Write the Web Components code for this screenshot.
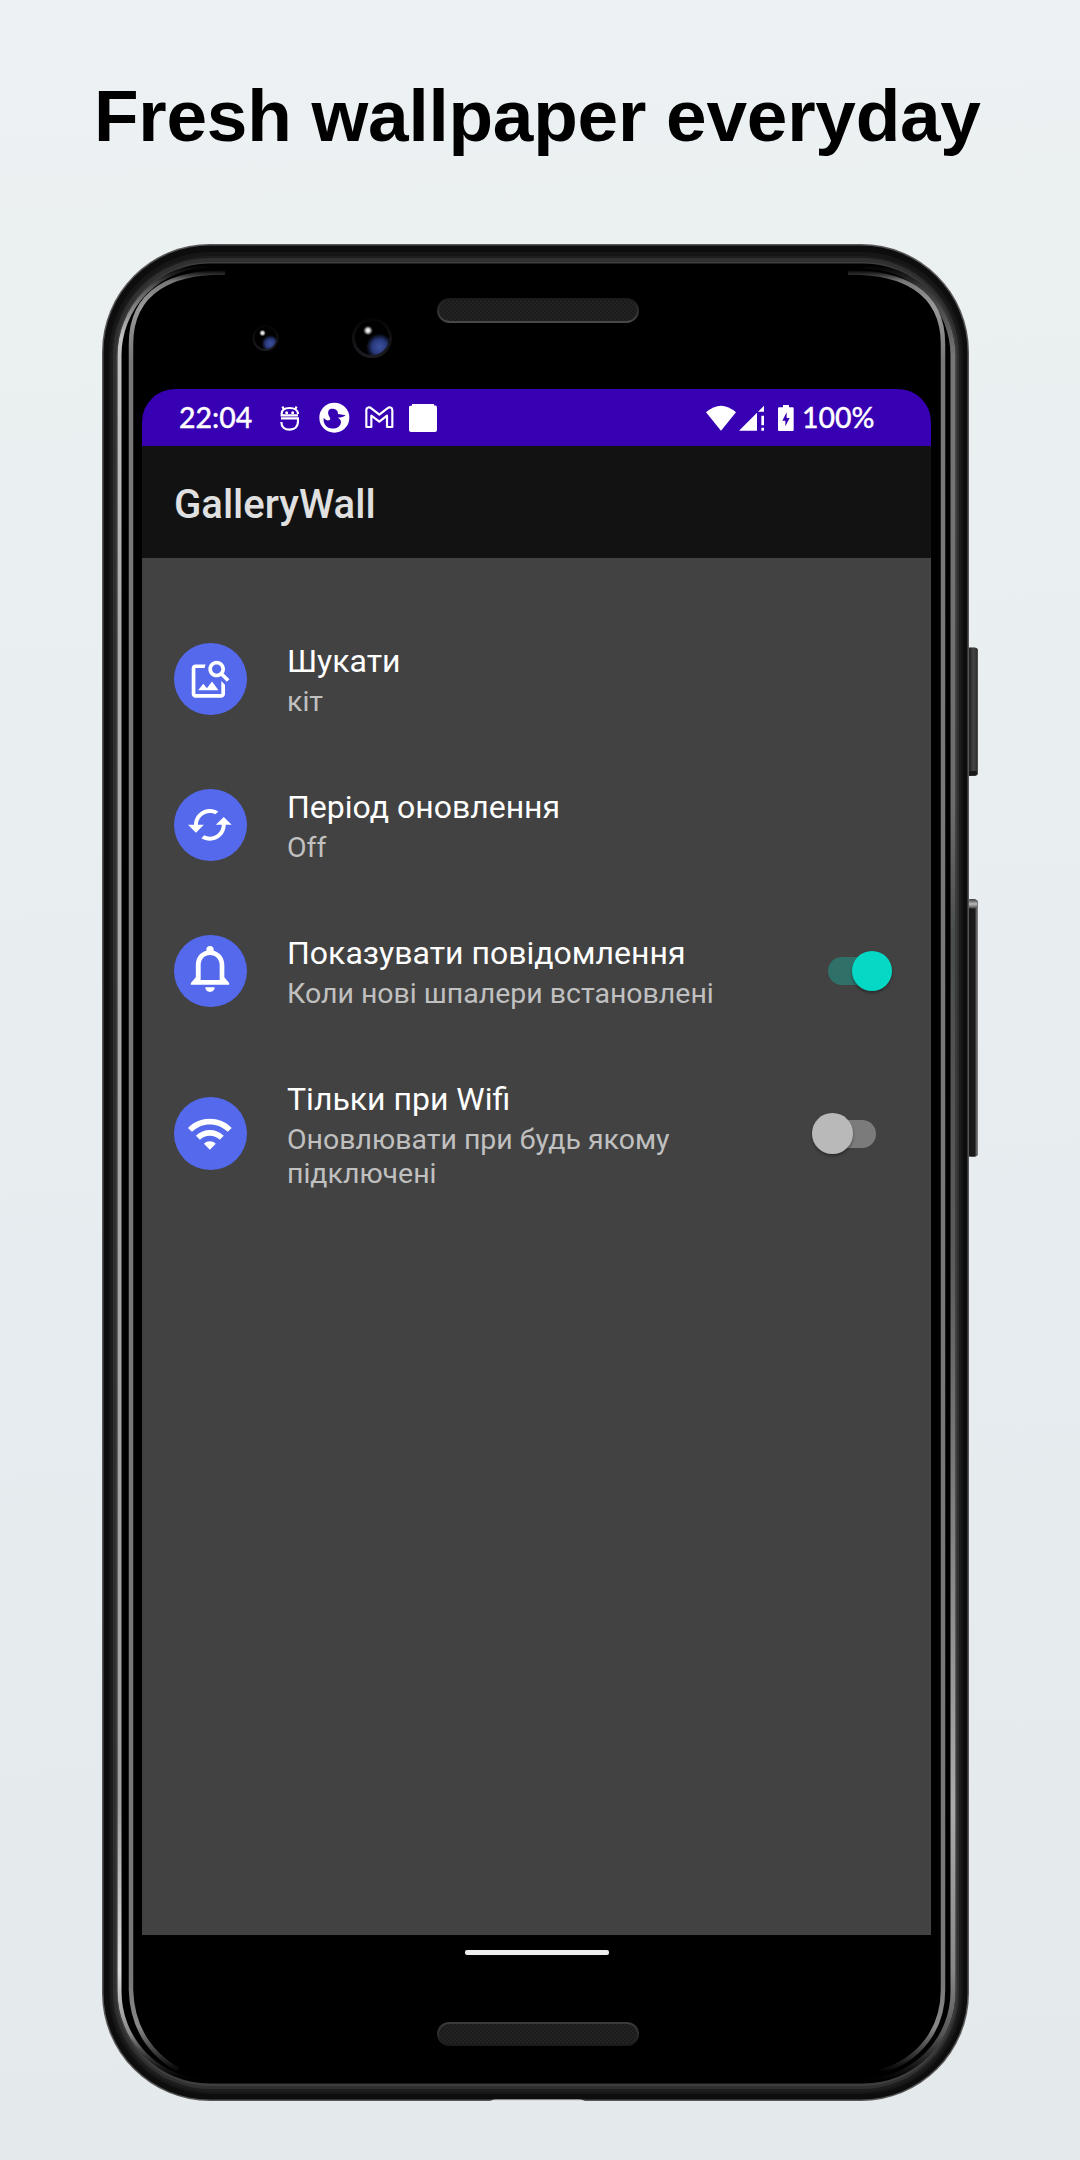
<!DOCTYPE html>
<html lang="uk">
<head>
<meta charset="utf-8">
<title>GalleryWall</title>
<style>
html,body{margin:0;padding:0}
body{width:1080px;height:2160px;overflow:hidden;background:linear-gradient(177deg,#edf1f4 0%,#ebf0f1 12%,#e9eef1 35%,#e6ecef 60%,#e4eaec 100%)}
</style>
</head>
<body>
<promo-page heading="Fresh wallpaper everyday">
  <phone-frame>
    <status-bar time="22:04" battery="100%"></status-bar>
    <app-bar>GalleryWall</app-bar>
    <settings-list>
      <setting-row icon="search" label="Шукати">кіт</setting-row>
      <setting-row icon="cached" label="Період оновлення">Off</setting-row>
      <setting-row icon="bell" label="Показувати повідомлення">Коли нові шпалери встановлені<toggle-switch slot="control" on></toggle-switch></setting-row>
      <setting-row icon="wifi" label="Тільки при Wifi">Оновлювати при будь якому підключені<toggle-switch slot="control"></toggle-switch></setting-row>
    </settings-list>
  </phone-frame>
</promo-page>
<script>
const define = (name, render) => customElements.define(name, class extends HTMLElement {
  constructor(){ super(); this.attachShadow({mode:'open'}); }
  connectedCallback(){ this.shadowRoot.innerHTML = render(this); }
});

define('promo-page', el => `
<style>
:host{display:flex;flex-direction:column;align-items:flex-start;width:1080px;height:2160px}
h1{margin:0;height:244px;width:1080px;box-sizing:border-box;padding:74px 0 0 94px;font:bold 73px/84px "Liberation Sans",sans-serif;letter-spacing:-.25px;color:#000;white-space:nowrap}
::slotted(phone-frame){margin-left:102px}
</style>
<h1>${el.getAttribute('heading')}</h1><slot></slot>`);

define('phone-frame', () => `
<style>
:host{display:flex;flex-direction:column;position:relative;width:867px;height:1857px;box-sizing:border-box;padding:145px 38px 0 40px}
svg.body{position:absolute;left:0;top:0;width:880px;height:1857px;overflow:visible}
.screen{position:relative;display:flex;flex-direction:column;height:1546px;width:789px;border-radius:33px 33px 0 0;overflow:hidden}
.nav{align-self:center;position:relative;width:144px;height:5px;border-radius:2px;background:#f0edf0;margin:15px 0 0 0}
</style>
<svg class="body" viewBox="102 244 880 1857">
<defs>
<linearGradient id="gl" gradientUnits="userSpaceOnUse" x1="0" y1="265" x2="0" y2="2080"><stop offset="0" stop-color="#444" stop-opacity="0"/><stop offset=".012" stop-color="#555"/><stop offset=".04" stop-color="#c4c4c4"/><stop offset=".2" stop-color="#aaa"/><stop offset=".85" stop-color="#a0a0a0"/><stop offset=".94" stop-color="#ddd"/><stop offset=".975" stop-color="#888"/><stop offset="1" stop-color="#444" stop-opacity="0"/></linearGradient>
<linearGradient id="gr" gradientUnits="userSpaceOnUse" x1="0" y1="265" x2="0" y2="2080"><stop offset="0" stop-color="#333" stop-opacity="0"/><stop offset=".012" stop-color="#383838"/><stop offset=".05" stop-color="#777"/><stop offset=".3" stop-color="#6c6c6c"/><stop offset=".37" stop-color="#4a4e4a"/><stop offset=".55" stop-color="#5c5c5c"/><stop offset=".85" stop-color="#aaa"/><stop offset=".94" stop-color="#888"/><stop offset=".975" stop-color="#555"/><stop offset="1" stop-color="#444" stop-opacity="0"/></linearGradient>
<linearGradient id="in" gradientUnits="userSpaceOnUse" x1="0" y1="270" x2="0" y2="2072"><stop offset="0" stop-color="#777" stop-opacity="0"/><stop offset=".006" stop-color="#777"/><stop offset=".02" stop-color="#999"/><stop offset=".05" stop-color="#787878"/><stop offset=".95" stop-color="#787878"/><stop offset=".975" stop-color="#888"/><stop offset="1" stop-color="#888" stop-opacity="0"/></linearGradient>
<linearGradient id="btn" x1="0" y1="0" x2="1" y2="0"><stop offset="0" stop-color="#111"/><stop offset=".25" stop-color="#2c2c2c"/><stop offset=".55" stop-color="#444"/><stop offset=".85" stop-color="#333"/><stop offset="1" stop-color="#555"/></linearGradient>
<linearGradient id="btn2" x1="0" y1="0" x2="1" y2="0"><stop offset="0" stop-color="#151515"/><stop offset=".7" stop-color="#1c1c1c"/><stop offset=".8" stop-color="#555"/><stop offset="1" stop-color="#888"/></linearGradient>
<linearGradient id="cap" x1="0" y1="0" x2="0" y2="1"><stop offset="0" stop-color="#444"/><stop offset=".5" stop-color="#bbb"/><stop offset="1" stop-color="#444"/></linearGradient>
<linearGradient id="spT" x1="0" y1="0" x2="0" y2="1"><stop offset="0" stop-color="#1b1b1b"/><stop offset=".5" stop-color="#2d2d2d"/><stop offset="1" stop-color="#484848"/></linearGradient>
<linearGradient id="spB" x1="0" y1="0" x2="0" y2="1"><stop offset="0" stop-color="#3b3b3b"/><stop offset="1" stop-color="#1b1b1b"/></linearGradient>
<pattern id="mesh" width="4" height="4" patternUnits="userSpaceOnUse"><rect width="4" height="4" fill="#1b1b1b"/><rect width="2" height="2" fill="#232323"/><rect x="2" y="2" width="2" height="2" fill="#232323"/></pattern>
<radialGradient id="glint"><stop offset="0" stop-color="#fff"/><stop offset=".4" stop-color="#ccc"/><stop offset="1" stop-color="#888" stop-opacity="0"/></radialGradient>
<radialGradient id="lens" cx=".7" cy=".74" r=".36"><stop offset="0" stop-color="#3c519e"/><stop offset=".55" stop-color="#293a7c"/><stop offset="1" stop-color="#000"/></radialGradient>
<linearGradient id="ring" x1="0" y1="0" x2="0" y2="1"><stop offset="0" stop-color="#050505"/><stop offset="1" stop-color="#1d1c22"/></linearGradient>
</defs>
<rect x="960" y="647.500" width="18" height="128.500" rx="4" fill="#222"/><rect x="968" y="648" width="10" height="127.500" rx="3" fill="url(#btn)"/><rect x="968" y="771" width="9" height="4" rx="2" fill="#161616"/>
<rect x="960" y="899.500" width="18" height="257" rx="4" fill="#222"/><rect x="968" y="899.500" width="10" height="257" rx="3" fill="url(#btn2)"/><rect x="968" y="899.500" width="9" height="9" rx="3" fill="url(#cap)"/>
<rect x="102" y="244" width="867" height="1857" rx="108" fill="#585656"/>
<rect x="103.500" y="245.500" width="864" height="1854" rx="106.500" fill="#0d0d0d"/>
<rect x="109" y="252" width="854" height="1842" rx="101" fill="#161616"/>
<rect x="111" y="256" width="850" height="1836" rx="99" fill="#1d1d1d"/>
<rect x="113" y="258" width="846" height="1831" rx="97" fill="#303030"/>
<rect x="116" y="262" width="841" height="1824" rx="94" fill="#3e3e3e"/>
<rect x="117.500" y="263.500" width="838" height="1820" rx="92" fill="#000"/>
<path d="M490 2101 Q492 2099.500 495 2099.500 H580 Q583 2099.500 585 2101Z" fill="#d5dbdd"/>
<g fill="none">
<path d="M209.500 265.500 A90 90 0 0 0 119.500 355.500 V1991.500 A90 90 0 0 0 209.500 2081.500" stroke="url(#gl)" stroke-width="4"/>
<path d="M863.500 266 A89.500 89.500 0 0 1 953 355.500 V1991.500 A89.500 89.500 0 0 1 863.500 2081" stroke="url(#gr)" stroke-width="5"/>
<path d="M225 272.500 C174 271.500 131 290 131 344 V1990 C132 2025 148 2052 178 2070" stroke="url(#in)" stroke-width="4.500"/>
<path d="M848 272.500 C900 271.500 943 290 943 344 V1990 C943 2029 920 2060 880 2072" stroke="url(#in)" stroke-width="4.500"/>
</g>
<g fill="url(#mesh)" stroke-width="2"><rect x="438" y="299" width="200" height="23" rx="11.500" stroke="url(#spT)"/><rect x="438" y="2023" width="200" height="22" rx="11" stroke="url(#spB)"/></g>
<circle cx="265.500" cy="338" r="12" fill="url(#lens)" stroke="url(#ring)" stroke-width="2"/><circle cx="262.500" cy="333" r="3.500" fill="url(#glint)"/>
<circle cx="372" cy="338" r="18.500" fill="url(#lens)" stroke="url(#ring)" stroke-width="3"/><circle cx="368" cy="330.500" r="5" fill="url(#glint)"/>
</svg>
<div class="screen"><slot></slot></div><div class="nav"></div>`);

define('status-bar', el => `
<style>
:host{display:flex;align-items:center;height:56.500px;box-sizing:border-box;padding:1px 57px 0 37px;background:#3700b3;color:#fff;font:500 28.500px/34px Lato,sans-serif}
svg{display:block;flex:none;fill:#fff}
span{padding-bottom:2px;-webkit-text-stroke:.3px #fff}
.t{width:101px}
.g{display:flex;align-items:center;flex:1}
.b{width:72px;text-align:right;margin-left:8px;white-space:nowrap}
</style>
<span class="t">${el.getAttribute('time')}</span>
<div class="g">
<svg width="19" height="26" viewBox="419 75 57 78"><g fill="none" stroke="#fff" stroke-width="6.500"><path d="M473 106 H424 V101 C424 89 434 84 448 84 S473 91 473 102M422 115 H473 V124 C473 140 463 149 448 149 S423 140 423 126"/><path d="M431 88 L426 80M464 88 L469 80"/></g><circle cx="439" cy="98" r="4.500"/><circle cx="457" cy="98" r="4.500"/></svg>
<svg style="margin-left:20px" width="31" height="31" viewBox="536 67 93 93"><circle cx="582" cy="114" r="45"/><path fill="#3700b3" d="M564 104 C561 91 569 86 578 87 C588 88 594 95 593 103 L616 107 C611 112 602 114 592 114 C598 117 602 121 602 127 C601 143 584 149 570 146 C556 142 548 130 550 114 C557 123 564 124 569 120 C572 116 566 112 564 104Z"/></svg>
<svg style="margin-left:15px" width="29" height="23" viewBox="673 79 87 69"><path fill="none" stroke="#fff" stroke-width="6.500" stroke-linejoin="round" d="M677 92 C677 82 687 81 692 86 L716 105 L740 86 C746 81 755 83 755 92 V142 H739 V108 L716 126 L692 108 V142 H677Z"/></svg>
<svg style="margin-left:15px" width="28" height="28" viewBox="0 0 28 28"><path d="M3 0H25V1.500H27Q28 2 28 4V26Q28 28 26 28H2Q0 28 0 26V3Q0 1.500 3 1.500Z"/></svg>
</div>
<svg width="30" height="26" viewBox="316 523 90 78"><path d="M316 545 Q361 505 406 545 L361 600Z"/></svg>
<svg style="margin-left:3px" width="26" height="26" viewBox="414 523 78 78"><path d="M414 600 L468 546V600ZM471 543 L489 525V543ZM481 555h8v29h-8zM481 591h8v9h-8z"/></svg>
<svg style="margin-left:13px" width="16" height="26" viewBox="533 524 48 78"><path fill-rule="evenodd" d="M548 524H566V531H577Q580 531 580 534V599Q580 602 577 602H536Q533 602 533 599V534Q533 531 536 531H548ZM559 546 L546 571H555V588L568 563H559Z"/></svg>
<span class="b">${el.getAttribute('battery')}</span>`);

define('app-bar', () => `
<style>:host{display:flex;align-items:center;height:112.500px;box-sizing:border-box;padding:6px 32px 0;background:#121212;color:#e0e0e0;font:500 40.100px/48px Roboto,sans-serif}</style>
<span><slot></slot></span>`);

define('settings-list', () => `
<style>:host{display:flex;flex-direction:column;flex:1;box-sizing:border-box;padding-top:48px;background:#424242}</style><slot></slot>`);

const icons = {
search:'<svg width="44.400" height="44.400" viewBox="0 0 24 24"><path d="M18 13v7H4V6h5.020c.05-.71.22-1.380.48-2H4c-1.100 0-2 .9-2 2v14c0 1.100.9 2 2 2h14c1.100 0 2-.9 2-2v-5l-2-2zm-1.500 5h-11l2.750-3.530 1.960 2.360 2.750-3.540zm2.800-9.110c.44-.7.7-1.510.7-2.390C20 4.010 17.990 2 15.500 2S11 4.010 11 6.500s2.010 4.500 4.490 4.500c.88 0 1.700-.26 2.390-.7L21 13.420 22.420 12 19.300 8.890zM15.500 9C14.120 9 13 7.880 13 6.500S14.120 4 15.500 4 18 5.120 18 6.500 16.880 9 15.500 9z"/></svg>',
cached:'<svg width="47.700" height="47.700" viewBox="0 0 24 24"><path d="M19 8l-4 4h3c0 3.310-2.690 6-6 6-1.010 0-1.970-.25-2.800-.7l-1.460 1.460C8.970 19.540 10.430 20 12 20c4.420 0 8-3.580 8-8h3l-4-4zM6 12c0-3.310 2.690-6 6-6 1.010 0 1.970.25 2.800.7l1.460-1.460C15.030 4.460 13.570 4 12 4c-4.420 0-8 3.580-8 8H1l4 4 4-4H6z"/></svg>',
bell:'<svg width="48" height="48" viewBox="-72 -70 144 144"><path fill-rule="evenodd" d="M-57.500 43.500V38L-42.500 21V-16C-42.500-38-30-54-11-59V-62A11 11 0 0 1 11-62V-59C30-54 43-38 43-16V21L57.500 38V43.500ZM-28 29H29V-16C29-34 16-46 0-46S-28-34-28-16Z"/><path d="M-14 51H14C14 60 7 65 0 65S-14 60-14 51Z"/></svg>',
wifi:'<svg width="47.700" height="47.700" viewBox="0 0 24 24"><path d="M1 9l2 2c4.970-4.970 13.030-4.970 18 0l2-2C16.930 2.930 7.080 2.930 1 9zm8 8l3 3 3-3c-1.650-1.660-4.340-1.660-6 0zm-4-4l2 2c2.760-2.760 7.240-2.760 10 0l2-2C15.140 9.140 8.870 9.140 5 13z"/></svg>'};
icons.bell = icons.bell.replace('<svg', '<svg overflow="visible"');

define('setting-row', el => `
<style>
:host{display:flex;align-items:center;box-sizing:border-box;min-height:146px;padding:33.200px 39px 33.200px 32px;font-family:Roboto,sans-serif}
.i{flex:none;display:flex;align-items:center;justify-content:center;width:72.500px;height:72.500px;border-radius:50%;background:#5469ec}
.i svg{fill:#fff;display:block}
.x{flex:1;margin-left:40.500px;padding:4px 32px 0 0}
.l{font-size:32px;line-height:37.700px;color:#fff}
.s{margin-top:4.500px;font-size:28.480px;line-height:33.300px;color:#c0c0c0}
</style>
<div class="i">${icons[el.getAttribute('icon')]}</div>
<div class="x"><div class="l">${el.getAttribute('label')}</div><div class="s"><slot></slot></div></div>
<slot name="control"></slot>`);

define('toggle-switch', el => { const on = el.hasAttribute('on'); return `
<style>
:host{display:flex;align-items:center;flex:none;width:80px;height:41px}
.t{flex:1;height:28px;margin:0 16px;border-radius:14px;background:${on?'#2f7169':'#7b7b7b'};display:flex;align-items:center;justify-content:${on?'flex-end':'flex-start'}}
.k{flex:none;width:40.500px;height:40.500px;border-radius:50%;margin:0 -16px;background:${on?'#05d8c4':'#b9b9b9'};box-shadow:0 2px 3px rgba(0,0,0,.35)}
</style><div class="t"><div class="k"></div></div>`; });
</script>
</body>
</html>
